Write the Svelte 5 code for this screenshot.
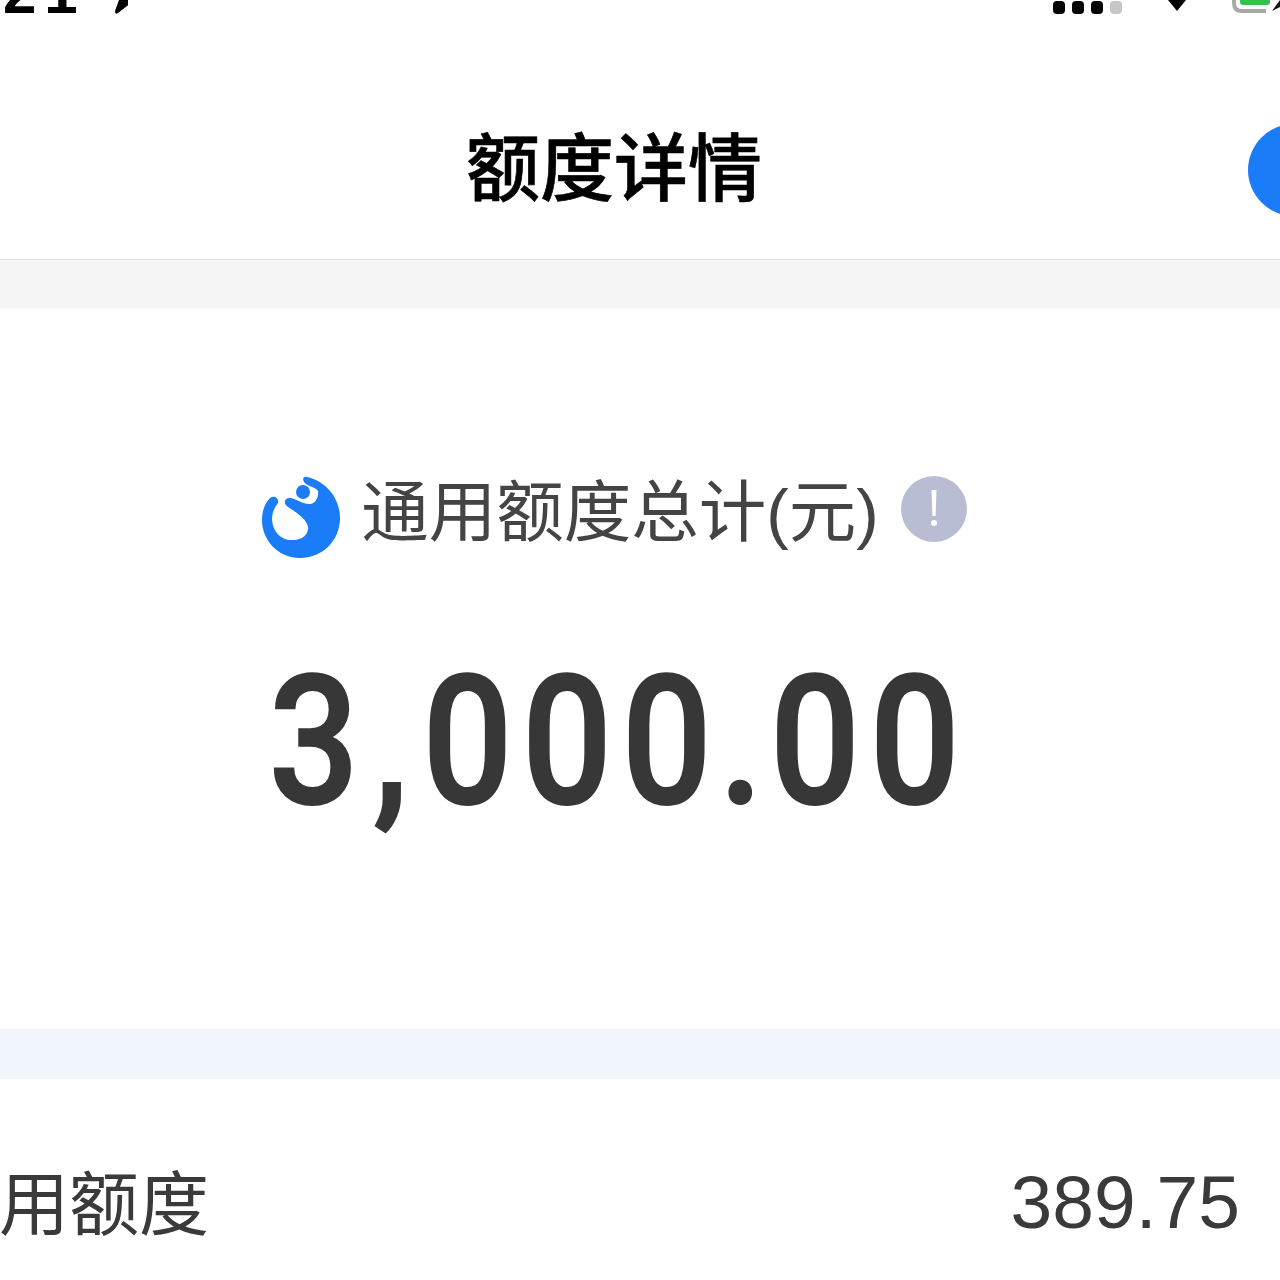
<script>
  const title = '额度详情';
  const totalLabel = '通用额度总计(元)';
  const total = '3,000.00';
  const rows = [{ name: '可用额度', value: '389.75', unit: '元' }];
</script>

<div class="page">
  <div class="status">
    <span class="time">21</span>
    <svg class="arrow" width="20" height="14" viewBox="0 0 20 14">
      <path d="M11 0h16L10 13q-3 2-3-2z" fill="#000" />
    </svg>
    <svg class="signal" width="230" height="16" viewBox="0 0 230 16">
      <rect x="3" y="1" width="12" height="13" rx="4" fill="#000" />
      <rect x="22" y="1" width="12" height="13" rx="4" fill="#000" />
      <rect x="41" y="1" width="12" height="13" rx="4" fill="#000" />
      <rect x="60" y="1" width="12" height="13" rx="4" fill="#c6c6c6" />
      <path d="M118 0h18l-9 11z" fill="#000" />
      <path d="M184 0v3q0 8 8 8h24" fill="none" stroke="#a8a8a8" stroke-width="4" />
      <path d="M190 0h30v2q0 3-3 3h-24q-3 0-3-3z" fill="#34c24f" />
      <path d="M222 11l8-11v7z" fill="#111" />
    </svg>
  </div>

  <header class="nav">
    <h1>{title}</h1>
    <div class="action"></div>
  </header>

  <div class="band grey"></div>

  <section class="hero">
    <div class="label">
      <svg class="logo" width="80" height="84" viewBox="261 475 80 84">
        <path
          fill="#1a7cf7"
          d="M307 477C326 481 340 498 340 518C340 541 322 558 300 558C279 558 262 541 262 520C262 511 265 503 270 498C274 495 279 498 278 503C274 508 272 513 272 520C273 532 281 540 291 540C302 541 309 534 308 527C307 520 299 514 288 507C282 503 285 497 291 498C298 500 303 504 309 504C315 504 319 498 318 491C316 487 306 486 304 482C302 478 304 476 307 477Z"
        />
        <circle cx="303" cy="492" r="7" fill="#1a7cf7" />
      </svg>
      <span>{totalLabel}</span>
      <svg class="info" width="66" height="66" viewBox="0 0 66 66">
        <circle cx="33" cy="33" r="33" fill="#b9bdd3" />
        <path d="M30.5 14h5l-.9 26h-3.2z" fill="#fff" />
        <circle cx="33" cy="47" r="3" fill="#fff" />
      </svg>
    </div>
    <div class="amount">
      {#each total.split('') as ch}
        <span class:comma={ch === ','} class:dot={ch === '.'}>{ch}</span>
      {/each}
    </div>
  </section>

  <div class="band blue"></div>

  {#each rows as row}
    <div class="row">
      <span class="name">{row.name}</span>
      <span class="value">{row.value}</span>
      <span class="unit">{row.unit}</span>
    </div>
  {/each}
</div>

<style>
  :global(body) {
    margin: 0;
    background: #fff;
  }

  .page {
    width: 1280px;
    height: 1280px;
    overflow: hidden;
    background: #fff;
    font-family: "Liberation Sans", "Noto Sans CJK SC", sans-serif;
  }

  .status {
    height: 16px;
    display: flex;
    align-items: flex-start;
    overflow: hidden;
  }

  .time {
    width: 102px;
    margin-left: 3px;
    margin-top: -42px;
    font-size: 60px;
    line-height: 70px;
    font-weight: 700;
    letter-spacing: 8px;
    color: #000;
    flex: none;
  }

  .arrow {
    margin-left: 3px;
    flex: none;
  }

  .signal {
    margin-left: auto;
    flex: none;
  }

  .nav {
    height: 244px;
    box-sizing: border-box;
    display: flex;
    align-items: center;
    justify-content: center;
    position: relative;
    padding: 64px 52px 0 0;
    border-bottom: 1px solid #e2e2e2;
    overflow: hidden;
  }

  h1 {
    margin: 0;
    font-size: 74px;
    line-height: 1;
    font-weight: 500;
    -webkit-text-stroke: 0.6px #000;
    color: #000;
  }

  .action {
    position: absolute;
    left: 1248px;
    top: 108px;
    width: 92px;
    height: 92px;
    border-radius: 50%;
    background: #1a7cf7;
  }

  .band {
    height: 50px;
  }

  .grey {
    height: 49px;
    background: #f5f5f5;
  }

  .blue {
    background: #f1f5fc;
  }

  .hero {
    height: 720px;
    box-sizing: border-box;
    padding: 158px 52px 0 0;
    display: flex;
    flex-direction: column;
    align-items: center;
    background: #fff;
  }

  .label {
    display: flex;
    align-items: center;
    color: #444;
    font-size: 67.5px;
    line-height: 84px;
  }

  .label span {
    margin: 0 22px 0 20px;
    white-space: nowrap;
  }

  .logo,
  .info {
    flex: none;
  }

  .logo {
    margin-top: 8px;
  }

  .info {
    margin-top: -8px;
  }

  .amount {
    margin: 83px 0 0 11px;
    display: flex;
    font-family: Roboto, sans-serif;
    font-size: 180px;
    line-height: 200px;
    font-weight: 500;
    letter-spacing: 11px;
    -webkit-text-stroke: 2px #373737;
    color: #373737;
    transform: scaleX(0.88);
  }

  .comma {
    padding: 0 5px;
  }

  .dot {
    margin: 0 -3px;
  }

  .row {
    display: flex;
    align-items: center;
    height: 200px;
    padding-top: 44px;
    box-sizing: border-box;
    color: #3a3a3a;
    white-space: nowrap;
  }

  .name {
    margin: -4px 0 0 -71px;
    font-size: 70px;
  }

  .value {
    margin: 2px 0 0 auto;
    font-size: 75px;
  }

  .unit {
    margin-left: 40px;
    margin-right: -69px;
    font-size: 69px;
    width: 69px;
    color: #999;
  }
</style>
